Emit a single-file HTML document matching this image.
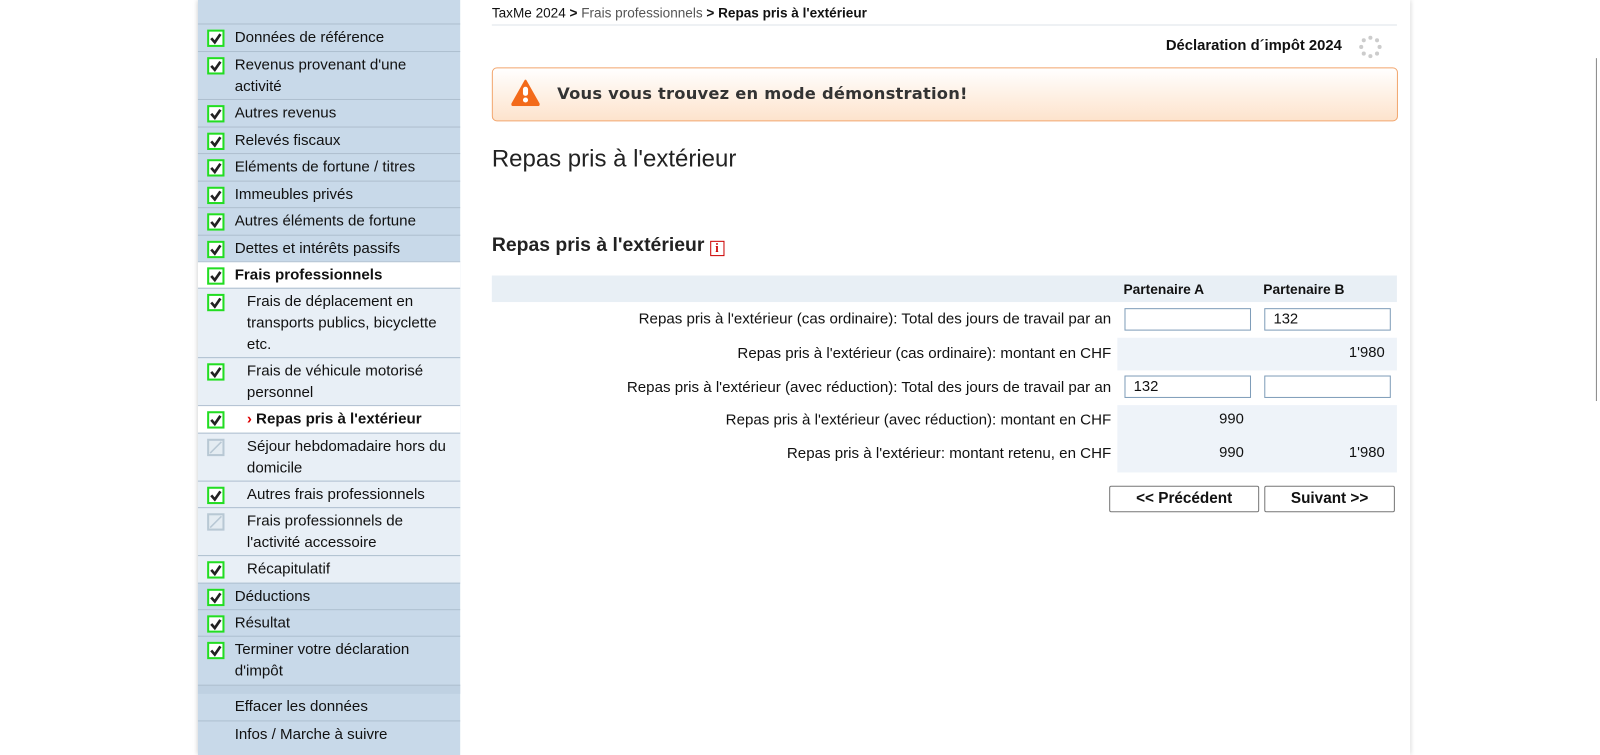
<!DOCTYPE html>
<html><head><meta charset="utf-8"><style>
*{box-sizing:border-box;margin:0;padding:0}
body{width:1600px;height:747px;overflow:hidden;background:#fff;font-family:"Liberation Sans",Arial,sans-serif;color:#111;position:relative}
#root{position:absolute;left:0;top:0;width:1568px;height:732px;transform:scale(1.0204);transform-origin:0 0}
#wrap{position:absolute;left:194px;top:0;width:1188px;height:740px;background:#fff;box-shadow:0 0 5px rgba(0,0,0,.25)}
#side{position:absolute;left:194px;top:0;width:257px;height:740px;background:#c8d9e9}
.r{position:absolute;left:0;width:257px;border-top:1px solid #aebfcf;font-size:14.8px;line-height:21px;padding:3px 6px 0 36px;color:#111}
.sub{background:#e8eff6;padding-left:48px}
.act{background:#fff}
.cb{position:absolute;left:9px;top:5px;width:17px;height:17px;border:2px solid #22dd22;background:#fff}
.cb svg{position:absolute;left:0px;top:0px}
.cb.g{border:2px solid #b8c8d4;background:#e4ecf2}
#main{position:absolute;left:482px;width:887px}
.bc{top:5px;font-size:13.3px;border-bottom:1px solid #dde3e8;height:20px}
.lbl{position:absolute;text-align:right;font-size:14.8px}
.inp{position:absolute;width:124px;height:22px;border:1px solid #7f9db9;background:#fff;font-size:14.5px;padding:2px 8px}
.btn{position:absolute;top:476px;height:26px;border:1px solid #777;border-radius:2px;background:#fff;font-weight:bold;font-size:15px;text-align:center;line-height:24px}
</style></head><body><div id="root">
<div id="wrap"></div>
<div id="side">
<div class="r" style="top:23px;height:27px"><span class="cb"><svg width="13" height="13"><path d="M2 6.5l3.5 4 5.5-8" stroke="#222" stroke-width="2.6" fill="none"/></svg></span>Données de référence</div>
<div class="r" style="top:50px;height:47px"><span class="cb"><svg width="13" height="13"><path d="M2 6.5l3.5 4 5.5-8" stroke="#222" stroke-width="2.6" fill="none"/></svg></span>Revenus provenant d'une activité</div>
<div class="r" style="top:97px;height:27px"><span class="cb"><svg width="13" height="13"><path d="M2 6.5l3.5 4 5.5-8" stroke="#222" stroke-width="2.6" fill="none"/></svg></span>Autres revenus</div>
<div class="r" style="top:124px;height:26px"><span class="cb"><svg width="13" height="13"><path d="M2 6.5l3.5 4 5.5-8" stroke="#222" stroke-width="2.6" fill="none"/></svg></span>Relevés fiscaux</div>
<div class="r" style="top:150px;height:27px"><span class="cb"><svg width="13" height="13"><path d="M2 6.5l3.5 4 5.5-8" stroke="#222" stroke-width="2.6" fill="none"/></svg></span>Eléments de fortune / titres</div>
<div class="r" style="top:177px;height:26px"><span class="cb"><svg width="13" height="13"><path d="M2 6.5l3.5 4 5.5-8" stroke="#222" stroke-width="2.6" fill="none"/></svg></span>Immeubles privés</div>
<div class="r" style="top:203px;height:27px"><span class="cb"><svg width="13" height="13"><path d="M2 6.5l3.5 4 5.5-8" stroke="#222" stroke-width="2.6" fill="none"/></svg></span>Autres éléments de fortune</div>
<div class="r" style="top:230px;height:26px"><span class="cb"><svg width="13" height="13"><path d="M2 6.5l3.5 4 5.5-8" stroke="#222" stroke-width="2.6" fill="none"/></svg></span>Dettes et intérêts passifs</div>
<div class="r act" style="top:256px;height:26px;font-weight:bold"><span class="cb"><svg width="13" height="13"><path d="M2 6.5l3.5 4 5.5-8" stroke="#222" stroke-width="2.6" fill="none"/></svg></span>Frais professionnels</div>
<div class="r sub" style="top:282px;height:68px"><span class="cb"><svg width="13" height="13"><path d="M2 6.5l3.5 4 5.5-8" stroke="#222" stroke-width="2.6" fill="none"/></svg></span>Frais de déplacement en transports publics, bicyclette etc.</div>
<div class="r sub" style="top:350px;height:47px"><span class="cb"><svg width="13" height="13"><path d="M2 6.5l3.5 4 5.5-8" stroke="#222" stroke-width="2.6" fill="none"/></svg></span>Frais de véhicule motorisé personnel</div>
<div class="r sub act" style="top:397px;height:27px;font-weight:bold"><span class="cb"><svg width="13" height="13"><path d="M2 6.5l3.5 4 5.5-8" stroke="#222" stroke-width="2.6" fill="none"/></svg></span><span style="color:#d00;margin-right:4px">&#x203A;</span>Repas pris à l'extérieur</div>
<div class="r sub" style="top:424px;height:47px"><span class="cb g"><svg width="13" height="13"><path d="M1 12L12 1" stroke="#b8c8d4" stroke-width="1.5"/></svg></span>Séjour hebdomadaire hors du domicile</div>
<div class="r sub" style="top:471px;height:26px"><span class="cb"><svg width="13" height="13"><path d="M2 6.5l3.5 4 5.5-8" stroke="#222" stroke-width="2.6" fill="none"/></svg></span>Autres frais professionnels</div>
<div class="r sub" style="top:497px;height:47px"><span class="cb g"><svg width="13" height="13"><path d="M1 12L12 1" stroke="#b8c8d4" stroke-width="1.5"/></svg></span>Frais professionnels de l'activité accessoire</div>
<div class="r sub" style="top:544px;height:27px"><span class="cb"><svg width="13" height="13"><path d="M2 6.5l3.5 4 5.5-8" stroke="#222" stroke-width="2.6" fill="none"/></svg></span>Récapitulatif</div>
<div class="r" style="top:571px;height:26px"><span class="cb"><svg width="13" height="13"><path d="M2 6.5l3.5 4 5.5-8" stroke="#222" stroke-width="2.6" fill="none"/></svg></span>Déductions</div>
<div class="r" style="top:597px;height:26px"><span class="cb"><svg width="13" height="13"><path d="M2 6.5l3.5 4 5.5-8" stroke="#222" stroke-width="2.6" fill="none"/></svg></span>Résultat</div>
<div class="r" style="top:623px;height:48px"><span class="cb"><svg width="13" height="13"><path d="M2 6.5l3.5 4 5.5-8" stroke="#222" stroke-width="2.6" fill="none"/></svg></span>Terminer votre déclaration d'impôt</div>
<div class="r" style="top:671px;height:9px;border-top:1px solid #aebfcf;background:#bfd1e2"></div>
<div class="r" style="top:680px;height:26px;border-top:none">Effacer les données</div>
<div class="r" style="top:706px;height:34px">Infos / Marche à suivre</div>
</div>

<div id="main" class="bc">TaxMe 2024 <b>&gt;</b> <span style="color:#555">Frais professionnels</span> <b>&gt; Repas pris à l'extérieur</b></div>
<div style="position:absolute;right:253px;top:37px;font-weight:bold;font-size:14.5px">Déclaration d´impôt 2024</div>
<svg style="position:absolute;left:1331px;top:34px" width="24" height="24" viewBox="0 0 24 24"><g fill="#ccc"><circle cx="12" cy="3" r="2"/><circle cx="18.5" cy="5.5" r="2"/><circle cx="21" cy="12" r="2"/><circle cx="18.5" cy="18.5" r="2"/><circle cx="12" cy="21" r="2"/><circle cx="5.5" cy="18.5" r="2"/><circle cx="3" cy="12" r="2"/><circle cx="5.5" cy="5.5" r="2"/></g></svg>
<div style="position:absolute;left:482px;top:66px;width:888px;height:53px;border:1px solid #f2a56c;border-radius:5px;background:linear-gradient(#fff,#fde3cc)">
<svg style="position:absolute;left:18px;top:11px" width="28" height="26" viewBox="0 0 28 26"><path d="M14 1L27 24Q27 25 26 25H2Q1 25 1 24Z" fill="#f36a1a" stroke="#f36a1a" stroke-width="2" stroke-linejoin="round"/><rect x="11.5" y="7" width="5" height="9" rx="2.5" fill="#fff"/><circle cx="14" cy="20" r="2.5" fill="#fff"/></svg>
<div style="position:absolute;left:63px;top:15px;font-weight:bold;font-size:16px;color:#333;font-family:'DejaVu Sans',sans-serif;letter-spacing:.2px">Vous vous trouvez en mode démonstration!</div></div>
<div style="position:absolute;left:482px;top:142px;font-size:23.5px;color:#222">Repas pris à l'extérieur</div>
<div style="position:absolute;left:482px;top:230px;font-size:19px;font-weight:bold;color:#222">Repas pris à l'extérieur <span style="display:inline-block;width:14px;height:15px;border:1.5px solid #c00;color:#c00;font-size:12px;line-height:12px;text-align:center;font-family:serif;vertical-align:-1px">i</span></div>
<div style="position:absolute;left:482px;top:270px;width:887px;height:26px;background:#e8eff5"></div>
<div style="position:absolute;left:1101px;top:276px;font-weight:bold;font-size:13.5px">Partenaire A</div>
<div style="position:absolute;left:1238px;top:276px;font-weight:bold;font-size:13.5px">Partenaire B</div>
<div style="position:absolute;left:1095px;top:331px;width:274px;height:32px;background:#eef3f9"></div>
<div style="position:absolute;left:1095px;top:397px;width:274px;height:66px;background:#eef3f9"></div>
<div class="lbl" style="top:305px;left:0;width:1089px">Repas pris à l'extérieur (cas ordinaire): Total des jours de travail par an</div>
<div class="inp" style="left:1102px;top:302px"></div>
<div class="inp" style="left:1239px;top:302px">132</div>
<div class="lbl" style="top:339px;left:0;width:1089px">Repas pris à l'extérieur (cas ordinaire): montant en CHF</div>
<div style="position:absolute;left:1290px;width:67px;text-align:right;top:338px;font-size:14.5px">1'980</div>
<div class="lbl" style="top:372px;left:0;width:1089px">Repas pris à l'extérieur (avec réduction): Total des jours de travail par an</div>
<div class="inp" style="left:1102px;top:368px">132</div>
<div class="inp" style="left:1239px;top:368px"></div>
<div class="lbl" style="top:404px;left:0;width:1089px">Repas pris à l'extérieur (avec réduction): montant en CHF</div>
<div style="position:absolute;left:1150px;width:69px;text-align:right;top:403px;font-size:14.5px">990</div>
<div class="lbl" style="top:437px;left:0;width:1089px">Repas pris à l'extérieur: montant retenu, en CHF</div>
<div style="position:absolute;left:1150px;width:69px;text-align:right;top:436px;font-size:14.5px">990</div>
<div style="position:absolute;left:1290px;width:67px;text-align:right;top:436px;font-size:14.5px">1'980</div>
<div class="btn" style="left:1087px;width:147px">&lt;&lt; Précédent</div>
<div class="btn" style="left:1239px;width:128px">Suivant &gt;&gt;</div>
<div style="position:absolute;left:1564px;top:57px;width:1px;height:336px;background:#888"></div>
</div></body></html>
